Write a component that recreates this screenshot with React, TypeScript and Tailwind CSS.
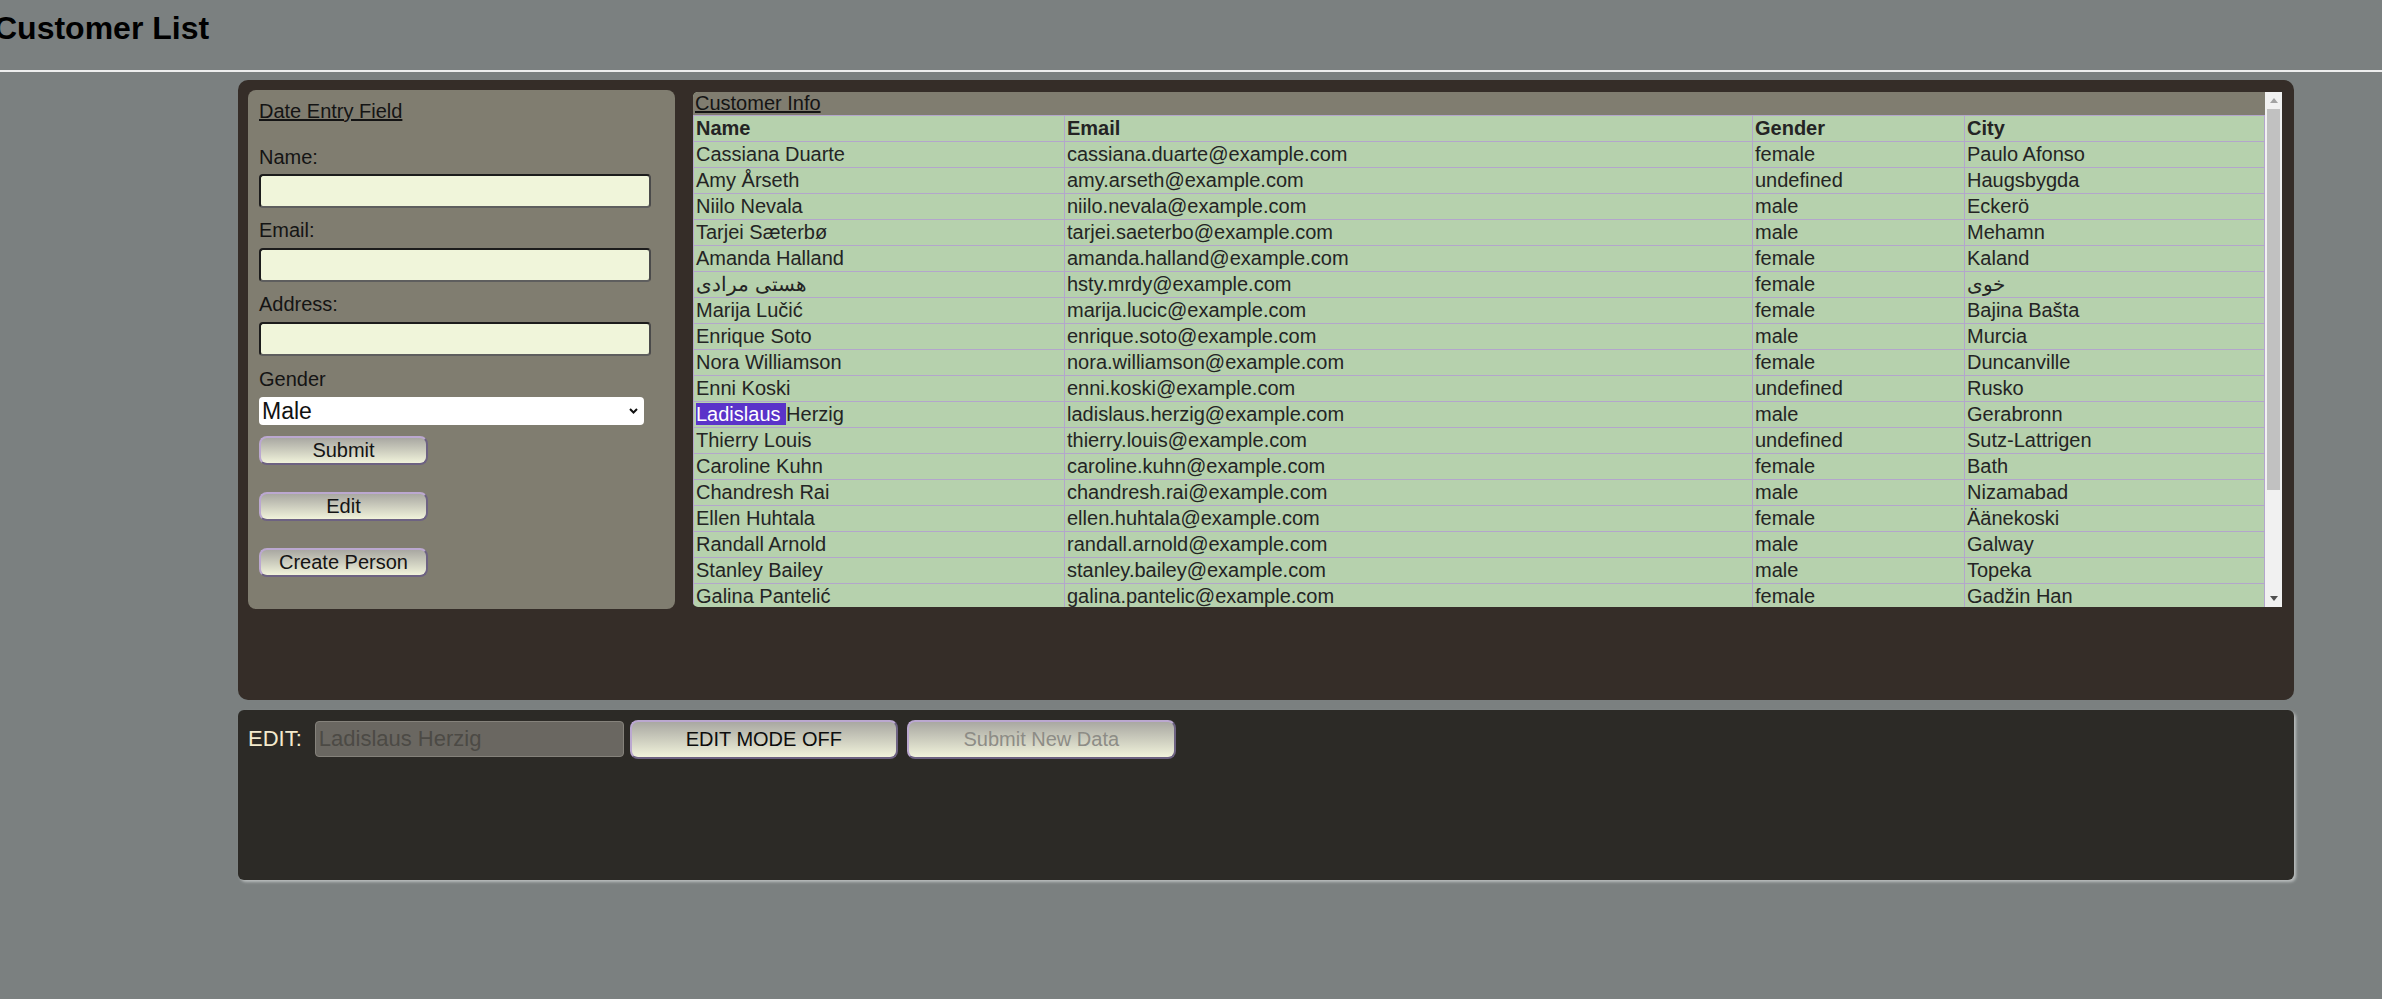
import React from "react";

type Person = [string, string, string, string];

const people: Person[] = [
  ["Cassiana Duarte", "cassiana.duarte@example.com", "female", "Paulo Afonso"],
  ["Amy Årseth", "amy.arseth@example.com", "undefined", "Haugsbygda"],
  ["Niilo Nevala", "niilo.nevala@example.com", "male", "Eckerö"],
  ["Tarjei Sæterbø", "tarjei.saeterbo@example.com", "male", "Mehamn"],
  ["Amanda Halland", "amanda.halland@example.com", "female", "Kaland"],
  ["هستی مرادی", "hsty.mrdy@example.com", "female", "خوی"],
  ["Marija Lučić", "marija.lucic@example.com", "female", "Bajina Bašta"],
  ["Enrique Soto", "enrique.soto@example.com", "male", "Murcia"],
  ["Nora Williamson", "nora.williamson@example.com", "female", "Duncanville"],
  ["Enni Koski", "enni.koski@example.com", "undefined", "Rusko"],
  ["Ladislaus Herzig", "ladislaus.herzig@example.com", "male", "Gerabronn"],
  ["Thierry Louis", "thierry.louis@example.com", "undefined", "Sutz-Lattrigen"],
  ["Caroline Kuhn", "caroline.kuhn@example.com", "female", "Bath"],
  ["Chandresh Rai", "chandresh.rai@example.com", "male", "Nizamabad"],
  ["Ellen Huhtala", "ellen.huhtala@example.com", "female", "Äänekoski"],
  ["Randall Arnold", "randall.arnold@example.com", "male", "Galway"],
  ["Stanley Bailey", "stanley.bailey@example.com", "male", "Topeka"],
  ["Galina Pantelić", "galina.pantelic@example.com", "female", "Gadžin Han"],
  ["Ella Thomsen", "ella.thomsen@example.com", "female", "Randers"],
  ["Oliver Kivela", "oliver.kivela@example.com", "male", "Pori"],
  ["Léa Roux", "lea.roux@example.com", "female", "Nantes"],
  ["Jonas Lund", "jonas.lund@example.com", "male", "Molde"],
  ["Aylin Kaya", "aylin.kaya@example.com", "female", "Bursa"],
];

const btn =
  "rounded-[8px] border-2 border-t-[#bba8d0] border-l-[#bba8d0] border-b-[#6d6282] border-r-[#6d6282] bg-linear-to-b from-[#a9a8a2] to-[#f1f3db] text-[20px] leading-[23px]";

const field =
  "block h-[34px] w-[392px] rounded-[4px] border-2 border-t-[#1c1c1c] border-l-[#1c1c1c] border-b-[#5e5e5e] border-r-[#4a4a4a] bg-[#f0f5da] px-[3px] text-[20px] outline-none";

const cell = "h-[25px] overflow-hidden whitespace-nowrap border-r border-[#b3a6cb] pl-[2px] leading-[25px]";
const row = "grid grid-cols-[371px_688px_212px_300px] border-b border-[#b3a6cb]";

function EntryForm() {
  return (
    <div className="h-[519px] w-[427px] shrink-0 rounded-[8px] bg-[#807d70] pl-[11px] pt-[10px] text-[20px] leading-[23px] text-[#141414]">
      <p className="underline">Date Entry Field</p>
      <label className="mt-[23px] block">Name:</label>
      <input className={`${field} mt-[5px]`} />
      <label className="mt-[11px] block">Email:</label>
      <input className={`${field} mt-[6px]`} />
      <label className="mt-[11px] block">Address:</label>
      <input className={`${field} mt-[6px]`} />
      <label className="mt-[12px] block">Gender</label>
      <div className="relative mt-[6px] w-[385px]">
        <select className="block h-[28px] w-[385px] appearance-none rounded-[4px] bg-white pl-[3px] text-[23px] leading-[28px] text-[#111] outline-none">
          <option>Male</option>
          <option>Female</option>
        </select>
        <svg className="pointer-events-none absolute right-[6px] top-[11px]" width="9" height="6" viewBox="0 0 9 6">
          <path d="M1 1 L4.5 4.5 L8 1" fill="none" stroke="#111" strokeWidth="2" />
        </svg>
      </div>
      <button className={`${btn} mt-[11px] block h-[29px] w-[169px]`}>Submit</button>
      <button className={`${btn} mt-[27px] block h-[29px] w-[169px]`}>Edit</button>
      <button className={`${btn} mt-[27px] block h-[29px] w-[169px]`}>Create Person</button>
    </div>
  );
}

function Scrollbar() {
  return (
    <div className="flex w-[17px] shrink-0 flex-col bg-[#f1f1f1]">
      <div className="flex h-[17px] items-center justify-center">
        <svg width="8" height="5" viewBox="0 0 8 5">
          <path d="M0 5 L4 0 L8 5 Z" fill="#a3a3a3" />
        </svg>
      </div>
      <div className="mx-[2px] h-[381px] bg-[#c1c1c1]" />
      <div className="flex-1" />
      <div className="flex h-[17px] items-center justify-center">
        <svg width="8" height="5" viewBox="0 0 8 5">
          <path d="M0 0 L8 0 L4 5 Z" fill="#505050" />
        </svg>
      </div>
    </div>
  );
}

function CustomerTable() {
  return (
    <div className="mt-[2px] flex h-[515px] w-[1589px] shrink-0 overflow-hidden rounded-l-[5px] text-[20px] text-[#242424]">
      <div className="w-[1572px] shrink-0 bg-[#b6d1ad]">
        <div className="h-[23px] bg-[#807d70] pl-[2px] leading-[23px] text-[#141414] underline">Customer Info</div>
        <div className="border-l border-t border-[#b3a6cb]">
          <div className={`${row} font-bold`}>
            <div className={cell}>Name</div>
            <div className={cell}>Email</div>
            <div className={cell}>Gender</div>
            <div className={cell}>City</div>
          </div>
          {people.map(([name, email, gender, city]) => (
            <div key={email} className={row}>
              <div className={cell}>
                {name === "Ladislaus Herzig" ? (
                  <>
                    <span className="bg-[#5a33c9] text-white">Ladislaus </span>Herzig
                  </>
                ) : (
                  name
                )}
              </div>
              <div className={cell}>{email}</div>
              <div className={cell}>{gender}</div>
              <div className={cell}>{city}</div>
            </div>
          ))}
        </div>
      </div>
      <Scrollbar />
    </div>
  );
}

function EditBar() {
  return (
    <div className="ml-[238px] mt-[10px] flex h-[170px] w-[2056px] items-start rounded-[6px] bg-[#2c2a26] pl-[10px] pt-[10px] shadow-[2px_2px_3px_rgba(200,204,204,0.8)]">
      <span className="mt-[6px] text-[22px] leading-[25px] text-[#f4eacd]">EDIT:</span>
      <input
        readOnly
        value="Ladislaus Herzig"
        className="ml-[13px] mt-[1px] h-[36px] w-[309px] rounded-[4px] border border-[#85827b] bg-[#6a6761] px-[3px] text-[22px] text-[#4c4a45] outline-none"
      />
      <button className={`${btn} ml-[6px] h-[39px] w-[268px] text-[#0c0c0c]`}>EDIT MODE OFF</button>
      <button className={`${btn} ml-[9px] h-[39px] w-[269px] text-[#8d8c86]`}>Submit New Data</button>
    </div>
  );
}

export default function App() {
  return (
    <div className="min-h-[999px] bg-[#7b8080] pb-[20px] font-['Liberation_Sans',Arial,sans-serif] text-[#141414]">
      <h1 className="ml-[-6px] pt-[10px] text-[32px] font-bold leading-[37px] text-black">Customer List</h1>
      <div className="mt-[23px] h-[2px] bg-[#eeeeee]" />
      <div className="ml-[238px] mt-[8px] flex h-[620px] w-[2056px] items-start gap-[18px] rounded-[10px] bg-[#352d28] p-[10px]">
        <EntryForm />
        <CustomerTable />
      </div>
      <EditBar />
    </div>
  );
}
